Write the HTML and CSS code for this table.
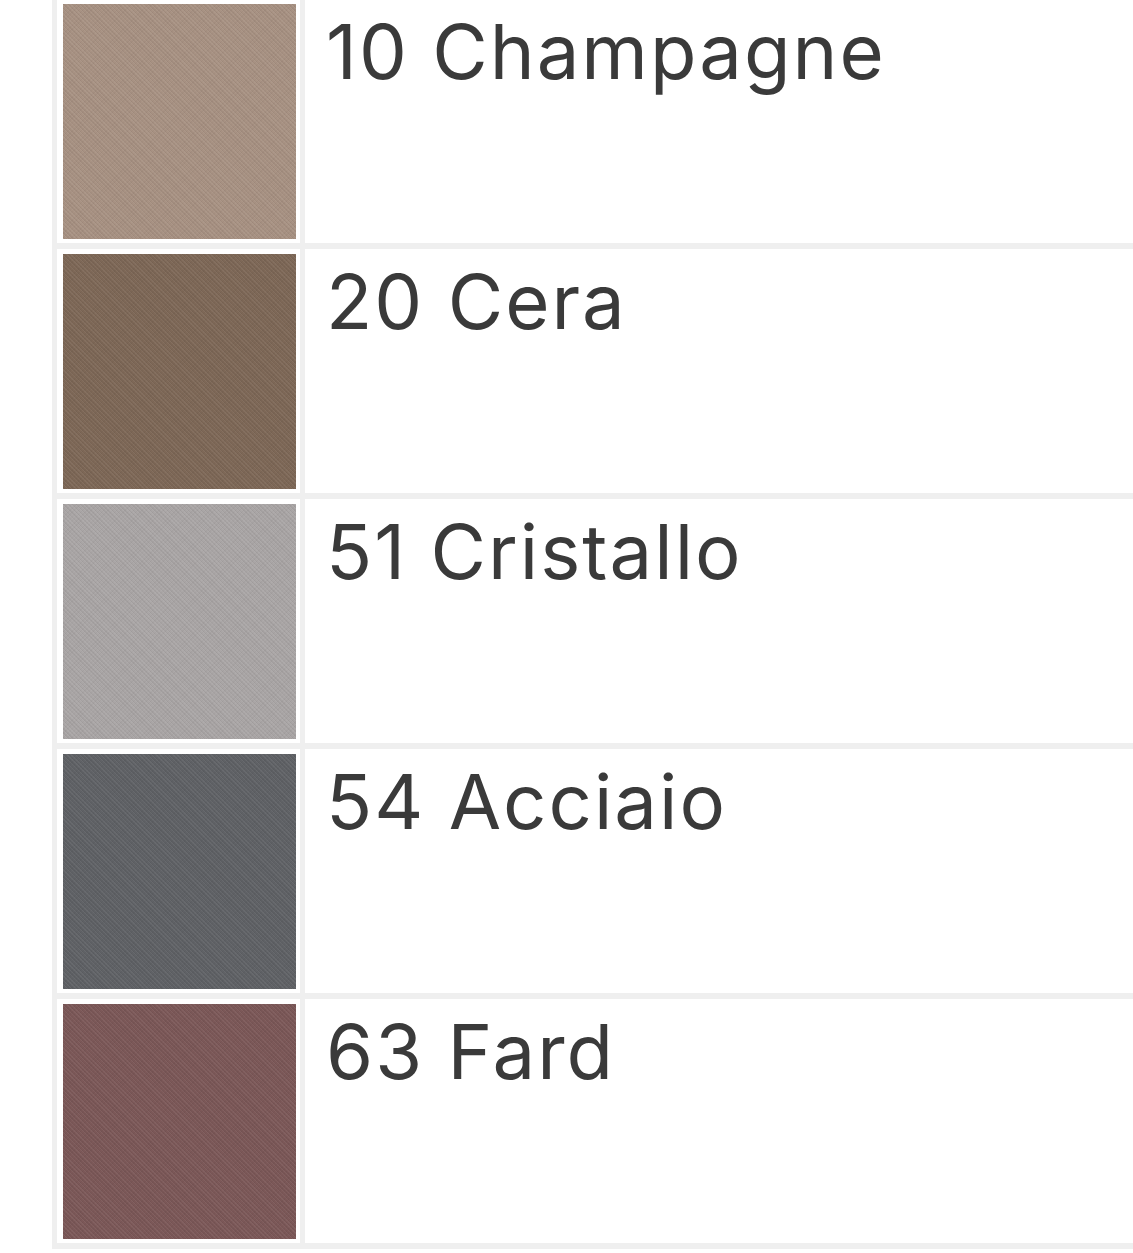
FILE: index.html
```html
<!DOCTYPE html>
<html lang="it">
<head>
    <meta charset="UTF-8">
    <meta name="viewport" content="width=device-width, initial-scale=1.0">
    <title>Colori</title>
    <link rel="stylesheet" href="styles.css">
</head>
<body>

    <!-- Tabella colori -->
    <table class="colors">
        <tr>
            <td class="swatch-cell"><div class="swatch champagne"></div></td>
            <td class="name-cell">10 Champagne</td>
        </tr>
        <tr>
            <td class="swatch-cell"><div class="swatch cera"></div></td>
            <td class="name-cell">20 Cera</td>
        </tr>
        <tr>
            <td class="swatch-cell"><div class="swatch cristallo"></div></td>
            <td class="name-cell">51 Cristallo</td>
        </tr>
        <tr>
            <td class="swatch-cell"><div class="swatch acciaio"></div></td>
            <td class="name-cell">54 Acciaio</td>
        </tr>
        <tr>
            <td class="swatch-cell"><div class="swatch fard"></div></td>
            <td class="name-cell">63 Fard</td>
        </tr>
    </table>

</body>
</html>
```

FILE: styles.css
```css
html, body {
    overflow: hidden;
}
body {
    background-color: white;
    color: #3a3a3a;
    font-family: Inter, 'Open Sans', sans-serif;
    margin: 0;
    padding: 0 0 0 52px;
}
.colors {
    width: 1110px;
    margin-top: -7px;
    background-color: #efefef;
    border-collapse: separate;
    border-spacing: 5px 6px;
}
.colors td {
    background-color: white;
    vertical-align: top;
}
.swatch-cell {
    width: 233px;
    padding: 5px 4px 4px 6px;
}
.name-cell {
    padding: 4px 0 0 21px;
    font-size: 76px;
    line-height: 96px;
    letter-spacing: 2px;
}
.swatch {
    width: 233px;
    height: 235px;
    background-image:
        repeating-linear-gradient(45deg, rgba(255,255,255,0.05) 0 1px, rgba(0,0,0,0.04) 1px 2px, transparent 2px 3px),
        repeating-linear-gradient(-45deg, rgba(0,0,0,0.03) 0 1px, transparent 1px 3px);
}
.champagne {
    background-color: #a89283;
}
.cera {
    background-color: #7e6857;
}
.cristallo {
    background-color: #aaa6a6;
}
.acciaio {
    background-color: #606266;
}
.fard {
    background-color: #7c5858;
}
```
